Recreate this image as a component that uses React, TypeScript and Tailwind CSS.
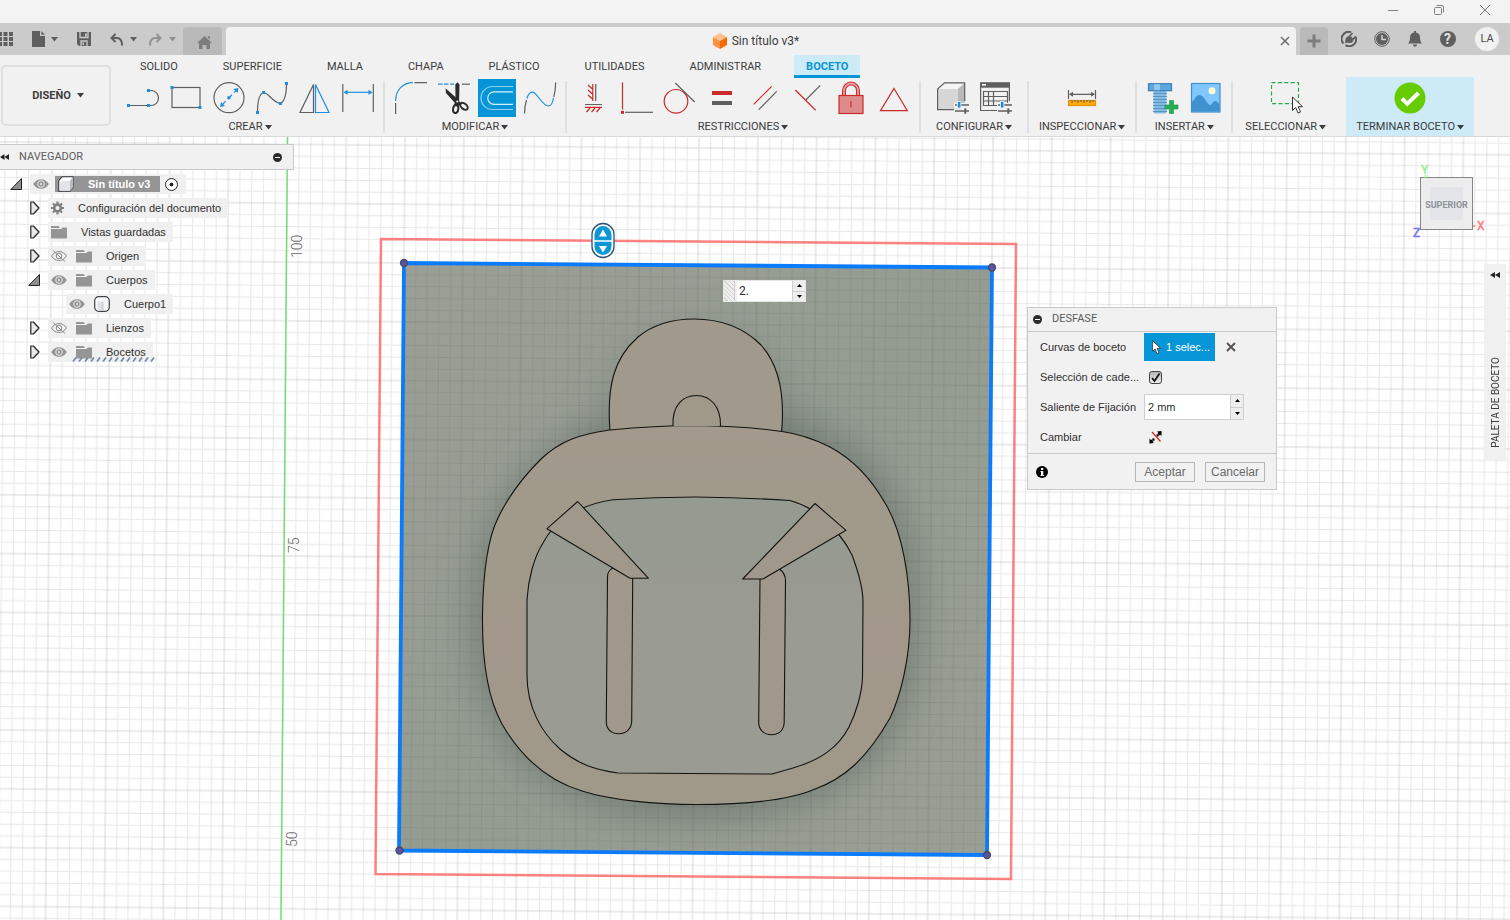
import React, { useState } from 'react'
import { clsx } from 'clsx'

const GRAY = '#5f5f5f'
const BLUE = '#1e8fe0'
const RED = '#cc2a2a'

const TABS = ['SOLIDO', 'SUPERFICIE', 'MALLA', 'CHAPA', 'PLÁSTICO', 'UTILIDADES', 'ADMINISTRAR', 'BOCETO']

const Caret: React.FC<{ className?: string }> = ({ className }) => (
  <svg className={clsx('shrink-0', className)} width="7" height="5" viewBox="0 0 7 5" fill="currentColor">
    <path d="M0 0h7L3.5 4.6z" />
  </svg>
)

/* 32x32 ribbon icon */
const Icon: React.FC<{ children: React.ReactNode }> = ({ children }) => (
  <svg width="32" height="32" viewBox="0 0 32 32" fill="none" stroke={GRAY} strokeWidth="1.2" className="shrink-0 overflow-visible">
    {children}
  </svg>
)

const Dot: React.FC<{ x: number; y: number; color?: string }> = ({ x, y, color = BLUE }) => (
  <rect x={x - 1.5} y={y - 1.5} width="3" height="3" fill={color} stroke="none" />
)

const Sliders = () => (
  <g>
    <path d="M17 23.2h16M17 29h16" stroke="#f1f1f1" strokeWidth="5" />
    <path d="M18 23h14M18 29h14" strokeWidth="1.6" />
    <rect x="20.5" y="19.5" width="3.4" height="6.5" fill={BLUE} stroke="#f1f1f1" strokeWidth="0.8" />
    <path d="M28.3 26.3v5.5" strokeWidth="2" />
  </g>
)

const IconLine = () => (
  <Icon>
    <path d="M1.5 23.5h19M22 8.5h2a7.5 7.5 0 0 1 0 15h-2" />
    <Dot x={1.5} y={23.5} /><Dot x={21.5} y={23.5} /><Dot x={21.5} y={8.5} />
  </Icon>
)
const IconRect = () => (
  <Icon>
    <rect x="2" y="5.5" width="28" height="20" />
    <Dot x={2} y={5.5} /><Dot x={30} y={25.5} />
  </Icon>
)
const IconCircle = () => (
  <Icon>
    <circle cx="16" cy="15.7" r="15" />
    <path d="M8.5 23.5 24 7.5" stroke={BLUE} strokeDasharray="6 3" />
    <path d="m25.5 6-1 5-4-4zM7 25l1-5 4 4z" fill={BLUE} stroke="none" />
    <Dot x={16} y={15.7} />
  </Icon>
)
const IconSpline = () => (
  <Icon>
    <path d="M1.5 30.5C1.5 20 3 12 7.500 10.5c5 0 9 10 17 11C29 19 30.500 12 30.500 1.500" />
    <Dot x={1.5} y={30.5} /><Dot x={7.5} y={10.5} /><Dot x={24.5} y={21.5} /><Dot x={30.5} y={1.5} />
  </Icon>
)
const IconMirror = () => (
  <Icon>
    <path d="M14.500 2.500V30.500H1z" />
    <path d="M16.500 2.500V30.500H30z" stroke={BLUE} />
  </Icon>
)
const IconDimension = () => (
  <Icon>
    <path d="M.8 2v28M31.300 2v28" />
    <path d="M3 10.300h26" stroke={BLUE} />
    <path d="M1.500 10.300l4-2.600v5.200zM30.500 10.300l-4-2.600v5.200z" fill={BLUE} stroke="none" />
  </Icon>
)
const IconFillet = () => (
  <Icon>
    <path d="M.6 21v11M19.500.6H32" />
    <path d="M.6 19C.6 8 8 .6 18 .6" stroke={BLUE} />
  </Icon>
)
const IconTrim = () => (
  <Icon>
    <path d="M0 2.200h16" stroke={BLUE} strokeDasharray="4.500 1.500" />
    <path d="M24 2.200h8" />
    <path d="M7.500 6.300 19 16.500 23.500 22 21 24 17 21 8 11z" fill="#2b2b2b" stroke="none" />
    <path d="M17.300 2.500 19.500.3 21.500 2.500 21 21 18.500 24.500 16.200 23 17.500 18z" fill="#2b2b2b" stroke="none" />
    <ellipse cx="17.700" cy="27" rx="2.600" ry="4" transform="rotate(8 17.700 27)" stroke="#2b2b2b" strokeWidth="2" />
    <ellipse cx="26" cy="24.300" rx="4.300" ry="2.700" transform="rotate(40 26 24.300)" stroke="#2b2b2b" strokeWidth="2" />
    <circle cx="19.300" cy="19.500" r="1" fill="#fff" stroke="none" />
  </Icon>
)
const IconOffset = () => (
  <Icon>
    <path d="M32 4.500H11.500a11.500 11.500 0 0 0 0 23H32" stroke="#8fd0f3" />
    <path d="M32 9.800H13a6.200 6.200 0 0 0 0 12.500H32" stroke="#d5effc" />
  </Icon>
)
const IconCurvature = () => (
  <Icon>
    <path d="M.5 31.500C.6 26 1.200 22 2.500 18M29.800 15C31 10 31.600 6 31.700.5" />
    <path d="M2.800 16.500C4.500 11.500 7 8.500 10.500 11c4 2.800 8.500 13 14 13 2.500 0 4.200-3.500 5-8" stroke={BLUE} />
  </Icon>
)
const IconHorVert = () => (
  <Icon>
    <path d="M18.700 2v17M8 22.500h17" />
    <path d="M15.800 2v17M8 25.300h17M11 3l4.500 4M11 8l4.500 4M11 13l4.500 4M9.500 30l3.500-4M14.500 30l3.500-4M19.500 30l3.500-4" stroke={RED} />
  </Icon>
)
const IconCoincident = () => (
  <Icon>
    <path d="M2.500.5v27" stroke={RED} />
    <path d="M5 30.300h28" />
    <Dot x={2.5} y={30.3} color={RED} />
  </Icon>
)
const IconTangent = () => (
  <Icon>
    <circle cx="13" cy="19.300" r="11.800" stroke={RED} />
    <path d="M12.300 1 31.700 20" />
  </Icon>
)
const IconEqual = () => (
  <Icon>
    <path d="M6 11h20" stroke={RED} strokeWidth="4" />
    <path d="M6 21h20" strokeWidth="4" />
  </Icon>
)
const IconParallel = () => (
  <Icon>
    <path d="M4.700 22.300 22.700 4.300" stroke={RED} />
    <path d="m9.700 27.700 18-18.400" />
  </Icon>
)
const IconPerpendicular = () => (
  <Icon>
    <path d="m3.300 8 20.400 20.300" stroke={RED} />
    <path d="M13.700 18 28.300 3.300" />
  </Icon>
)
const IconLock = () => (
  <Icon>
    <path d="M9 14V8.500a7 7 0 0 1 14 0V14" stroke={RED} strokeWidth="4" />
    <path d="M9 14V8.500a7 7 0 0 1 14 0V14" stroke="#e5a0a0" strokeWidth="1.800" />
    <rect x="4" y="13.500" width="24" height="18" fill="#df8b8b" stroke={RED} />
    <path d="M16 19v6.500" stroke={RED} />
  </Icon>
)
const IconSymmetry = () => (
  <Icon>
    <path d="m16 6.500 13.300 22.200H2.500z" stroke={RED} />
  </Icon>
)
const IconConfigure = () => (
  <Icon>
    <path d="M.6 7 7.500.8H27.700V23L21 28z" fill="#b9b9b9" stroke="none" />
    <path d="M.6 7 7.500.8H27.700L21 7z" fill="#f4f4f4" stroke="none" />
    <path d="M.6 7H21v20.700H.6z" fill="#d6d6d6" stroke="none" />
    <path d="M17 27.700H.6V7L7.500.8H27.700V19" />
    <Sliders />
  </Icon>
)
const IconTable = () => (
  <Icon>
    <path d="M.6 1v27.500H17M29.400 1v18" />
    <path d="M0 .2h30v5.500H0z" fill={GRAY} stroke="none" />
    <path d="M2 2h4v1.600H2z" fill="#fff" stroke="none" />
    <path d="M3.500 9.500h24v14h-24zM3.500 14.500h24M3.500 19h24M8.500 9.500v14M13.500 9.500v14" />
    <Sliders />
  </Icon>
)
const IconMeasure = () => (
  <Icon>
    <path d="M2.500 8v9M29.500 8v9M4 12.300h24" />
    <path d="m3 12.300 4-2.500v5zM29 12.300l-4-2.500v5z" fill={GRAY} stroke="none" />
    <rect x="2.500" y="18.500" width="27" height="5" fill="#ffab0a" stroke="#e59400" />
    <path d="M6 18v3M9 18v2M12 18v3M15 18v2M18 18v3M21 18v2M24 18v3M27 18v2" strokeWidth="1" />
  </Icon>
)
const IconBolt = () => (
  <Icon>
    <rect x="6.500" y="8" width="13" height="23.500" rx="2" fill="#84bbe4" stroke="none" />
    <path d="M6 11.500h14M6 14.500h14M6 17.500h14M6 20.500h14M6 23.500h14M6 26.500h14M6 29.500h14" stroke="#5795c5" />
    <rect x="1.500" y="1.700" width="23" height="7" fill="#5ea5db" stroke="#397fb4" />
    <path d="M7 2.200h6v6H7z" fill="#90c8ef" stroke="none" />
    <path d="M22.500 18.500h4v4.500H31v4h-4.500v4.500h-4V27H18v-4h4.500z" fill="#27ae55" stroke="#1c8f42" strokeWidth=".6" />
  </Icon>
)
const IconCanvas = () => (
  <Icon>
    <rect x="1.500" y="1.500" width="28.500" height="28.500" fill="#80c7ff" stroke="#3f90cc" />
    <circle cx="22" cy="8.700" r="3.500" fill="#fff8cf" stroke="none" />
    <path d="M2 20c3-3 4-7 7.500-7 5 0 7 9 10.500 10 2 0 3-4 5-4 2 0 3 2 4.500 3v7.500H2z" fill="#3f92cd" stroke="none" />
  </Icon>
)
const Cursor = () => (
  <path d="M.5.5v13.500l3.200-3 2.300 5.500 2.500-1-2.300-5.300h4.300z" fill="#fff" stroke="#333" strokeWidth="1" />
)
const IconSelect = () => (
  <Icon>
    <rect x="1.500" y=".7" width="27" height="21" stroke="#23a94e" strokeDasharray="4 2.400" />
    <g transform="translate(22 14.500)"><Cursor /></g>
  </Icon>
)
const IconFinish = () => (
  <Icon>
    <circle cx="16" cy="16" r="15.500" fill="#66cc00" stroke="none" />
    <path d="m8 16.500 5.300 5.300L24.500 11" stroke="#fff" strokeWidth="4" />
  </Icon>
)

interface ToolGroup {
  label: string
  pad: string
  tools: { name: string; Icon: React.FC; active?: boolean }[]
}

const GROUPS: ToolGroup[] = [
  {
    label: 'CREAR', pad: 'px-1',
    tools: [
      { name: 'Línea', Icon: IconLine }, { name: 'Rectángulo', Icon: IconRect },
      { name: 'Círculo', Icon: IconCircle }, { name: 'Spline', Icon: IconSpline },
      { name: 'Simetría', Icon: IconMirror }, { name: 'Cota', Icon: IconDimension },
    ],
  },
  {
    label: 'MODIFICAR', pad: 'px-1',
    tools: [
      { name: 'Empalme', Icon: IconFillet }, { name: 'Recortar', Icon: IconTrim },
      { name: 'Desfase', Icon: IconOffset, active: true }, { name: 'Curva de fusión', Icon: IconCurvature },
    ],
  },
  {
    label: 'RESTRICCIONES', pad: 'px-1',
    tools: [
      { name: 'Horizontal/Vertical', Icon: IconHorVert }, { name: 'Coincidente', Icon: IconCoincident },
      { name: 'Tangente', Icon: IconTangent }, { name: 'Igual', Icon: IconEqual },
      { name: 'Paralelo', Icon: IconParallel }, { name: 'Perpendicular', Icon: IconPerpendicular },
      { name: 'Bloquear', Icon: IconLock }, { name: 'Simétrico', Icon: IconSymmetry },
    ],
  },
  {
    label: 'CONFIGURAR', pad: 'px-[10px]',
    tools: [{ name: 'Configurar', Icon: IconConfigure }, { name: 'Tabla', Icon: IconTable }],
  },
  { label: 'INSPECCIONAR', pad: 'px-[10px]', tools: [{ name: 'Medir', Icon: IconMeasure }] },
  {
    label: 'INSERTAR', pad: 'px-1',
    tools: [{ name: 'Insertar pieza', Icon: IconBolt }, { name: 'Lienzo', Icon: IconCanvas }],
  },
  { label: 'SELECCIONAR', pad: 'px-3', tools: [{ name: 'Seleccionar', Icon: IconSelect }] },
]

const TitleBar = () => (
  <div className="h-[23px] flex justify-end items-center gap-9 bg-[#f3f3f3] pr-5 pb-[3px] text-[#808080]">
    <button aria-label="Minimizar" className="w-[10px] h-[10px]">
      <svg width="10" height="10" stroke="currentColor"><path d="M0 5.500h10" /></svg>
    </button>
    <button aria-label="Restaurar" className="w-[10px] h-[10px]">
      <svg width="10" height="10" fill="none" stroke="currentColor">
        <rect x=".5" y="2.500" width="7" height="7" rx="1" /><path d="M2.500.5H8A1.500 1.500 0 0 1 9.500 2v5.500" />
      </svg>
    </button>
    <button aria-label="Cerrar" className="w-[10px] h-[10px]">
      <svg width="10" height="10" stroke="currentColor"><path d="m0 0 10 10M10 0 0 10" /></svg>
    </button>
  </div>
)

const TabBar = () => (
  <div className="h-8 flex items-end bg-[#cbcbcb] text-[#5f5f5f]">
    {/* Acceso rápido */}
    <div className="h-full flex items-center gap-[19px] pr-[7px] shrink-0">
      <button aria-label="Panel de datos">
        <svg width="13" height="14" fill="currentColor">
          <path d="M0 0h2v4H0zM3.500 0h4v4h-4zM9 0h4v4H9zM0 5h2v4H0zM3.500 5h4v4h-4zM9 5h4v4H9zM0 10h2v4H0zM3.500 10h4v4h-4zM9 10h4v4H9z" />
        </svg>
      </button>
      <button aria-label="Archivo" className="flex items-center gap-[6px]">
        <svg width="13" height="16" fill="currentColor"><path d="M0 0h8v5h5v11H0z" /><path d="M9.300 0 13 3.800H9.300z" /></svg>
        <Caret />
      </button>
      <button aria-label="Guardar">
        <svg width="14" height="14" fill="currentColor">
          <path d="M0 0h14v14H2l-2-2z" />
          <path d="M3 0v5.500h8V0M4 14V9h6v5" fill="none" stroke="#cbcbcb" strokeWidth="1.300" /><path d="M8 1.500h1.800v3H8zM5.500 10.500h1.500v2.500H5.500z" fill="#cbcbcb" />
        </svg>
      </button>
      <div className="flex items-center gap-3">
        <button aria-label="Deshacer" className="flex items-center gap-[7px]">
          <svg width="13" height="13" fill="none" stroke="currentColor" strokeWidth="2"><path d="M5.500 1 1.500 5l4 4M1.500 5H7c3 0 5 2.500 5 7.500" /></svg>
          <Caret />
        </button>
        <button aria-label="Rehacer" className="flex items-center gap-[7px] text-[#929292]">
          <svg width="13" height="13" fill="none" stroke="currentColor" strokeWidth="2"><path d="m7.500 1 4 4-4 4M11.500 5H6C3 5 1 7.500 1 12.500" /></svg>
          <Caret />
        </button>
      </div>
    </div>
    <button aria-label="Inicio" className="w-[39px] h-7 mr-1 rounded-t bg-[#b9b9b9] flex justify-center items-end pl-1 pb-[6px] text-[#7d7d7d] shrink-0">
      <svg width="15" height="13" fill="currentColor"><path d="M7.500 0 15 7h-2v6H9.500V9h-4v4H2V7H0zM10.800 0h2v3.500l-2-1.800z" /></svg>
    </button>

    {/* Documento abierto */}
    <div className="flex-1 h-7 rounded-t bg-[#f1f1f1] flex items-center pr-[6px]">
      <div className="flex-1 flex justify-center items-center gap-[5px] pl-[6px] text-xs text-[#3c3c3c]">
        <svg width="14" height="16">
          <path d="m7 0 7 4-7 4-7-4z" fill="#ffc08a" /><path d="m0 4 7 4v8l-7-4z" fill="#ff9140" /><path d="m14 4-7 4v8l7-4z" fill="#f56a00" />
        </svg>
        Sin título v3*
      </div>
      <button aria-label="Cerrar documento" className="w-[10px] h-[10px]">
        <svg width="10" height="10" stroke="#6a6a6a" strokeWidth="1.500"><path d="m1 1 8 8M9 1 1 9" /></svg>
      </button>
    </div>
    <button aria-label="Nuevo documento" className="w-7 h-7 ml-1 rounded-t bg-[#b9b9b9] flex justify-center items-center text-[#7d7d7d] shrink-0">
      <svg width="14" height="14" stroke="currentColor" strokeWidth="3"><path d="M7 .5v13M.5 7h13" /></svg>
    </button>

    <div className="h-full flex items-center pl-1 pr-[11px] shrink-0">
      <button aria-label="Extensiones" className="w-[33px] flex justify-center">
        <svg width="16" height="16" fill="none" stroke="currentColor">
          <path d="M10 1.200A7 7 0 0 0 2.500 12.500M4.500 14.200A7 7 0 0 0 14.800 6" strokeWidth="2" />
          <path d="M3 13.500c1.500-1 1-2.500 1.500-5C5 5.500 8 4 10 5.500L12 7.500c1.500 3-1.500 5-4 4.500-2-.5-3.500-.5-5 1.500z" fill="currentColor" stroke="none" />
          <path d="m8.500 5.500 3-3.500M11.500 8.500l3.500-3" strokeWidth="1.700" />
        </svg>
      </button>
      <button aria-label="Estado de trabajos" className="w-[33px] flex justify-center">
        <svg width="16" height="16" fill="none">
          <circle cx="8" cy="8" r="7.300" stroke="currentColor" /><circle cx="8" cy="8" r="6" fill="currentColor" />
          <path d="M8 4v4.500h4" stroke="#d5d5d5" strokeWidth="1.500" />
        </svg>
      </button>
      <button aria-label="Notificaciones" className="w-[33px] flex justify-center">
        <svg width="14" height="16" fill="currentColor"><path d="M6 0h2v1.500c3 .5 4 2.500 4 5 0 3 .5 4.500 2 6H0c1.500-1.500 2-3 2-6 0-2.500 1-4.500 4-5zM5 13.500h4c0 3-4 3-4 0z" /></svg>
      </button>
      <button aria-label="Ayuda" className="w-[33px] flex justify-center">
        <span className="w-4 h-4 rounded-full bg-[#5f5f5f] text-[#e0e0e0] text-sm leading-4 font-bold">?</span>
      </button>
      <button className="w-6 h-6 ml-[11px] rounded-full bg-[#f1f1f1] text-[11px] text-[#4a4a4a]">LA</button>
    </div>
  </div>
)

const Ribbon: React.FC<{ tab: string; onTab: (t: string) => void }> = ({ tab, onTab }) => (
  <div className="flex bg-[#f1f1f1] border-b border-[#d9d9d9] text-[11px] leading-4 text-[#3c3c3c]">
    <button className="w-[110px] h-[61px] ml-[1px] mt-[10px] pl-1 rounded-[5px] border-2 border-[#dfdfdf] flex justify-center items-center gap-[6px] font-bold shrink-0">
      DISEÑO <Caret />
    </button>
    <div>
      <div className="flex gap-[21px] pl-[17px]">
        {TABS.map(t => (
          <button
            key={t}
            onClick={() => onTab(t)}
            className={clsx(
              'h-[23px] px-3 pt-[3px] border-b-[3px]',
              t === tab ? 'bg-[#cdeaf7] border-[#0696d7] text-[#0696d7] font-bold' : 'border-transparent'
            )}
          >
            {t}
          </button>
        ))}
      </div>
      <div className="flex pl-[6px]">
        {GROUPS.map(g => (
          <div key={g.label} className="flex items-start">
            <div className={clsx('flex flex-col items-center', g.pad)}>
              <div className="flex h-10 pt-[1px]">
                {g.tools.map(t => (
                  <button
                    key={t.name}
                    aria-label={t.name}
                    className="w-[43px] h-[38px] flex justify-center items-center"
                  >
                    <span className={clsx('h-[38px] flex items-center px-[3px]', t.active && 'bg-[#0696d7]')}>
                      <t.Icon />
                    </span>
                  </button>
                ))}
              </div>
              <button className="h-[18px] flex items-center gap-[2px]">{g.label} <Caret /></button>
            </div>
            <div className={clsx('w-[2px] h-[52px] mt-[3px]', g.label !== 'SELECCIONAR' && 'bg-[#dfdfdf]')} />
          </div>
        ))}
        <div className="flex flex-col items-center w-32 ml-[6px] -mt-[1px] bg-[#cdeaf7]">
          <button aria-label="Terminar" className="h-[41px] flex items-center"><IconFinish /></button>
          <button className="h-[18px] flex items-center gap-[2px]">TERMINAR BOCETO <Caret /></button>
        </div>
      </div>
    </div>
  </div>
)

/* Lienzo: rejilla girada medio grado, 11.76 px por mm */
const Viewport = () => (
  <svg className="absolute inset-0 w-full h-full" fontFamily="Roboto, sans-serif">
    <defs>
      <pattern id="grid" width="58.800" height="58.800" patternUnits="userSpaceOnUse" patternTransform="translate(404 263) rotate(0.490)">
        <path
          d="M11.760 0v58.800M23.520 0v58.800M35.280 0v58.800M47.040 0v58.800M0 11.760h58.800M0 23.520h58.800M0 35.280h58.800M0 47.040h58.800"
          stroke="#000" strokeOpacity=".09"
        />
        <path d="M0 0v58.800M58.800 0v58.800M0 0h58.800M0 58.800h58.800" stroke="#000" strokeOpacity=".15" />
      </pattern>
      <linearGradient id="plate" x1="0" y1="0" x2="1" y2="1">
        <stop offset="0" stopColor="#9b9f96" /><stop offset=".5" stopColor="#949c92" /><stop offset="1" stopColor="#9a9f94" />
      </linearGradient>
      <linearGradient id="ring" x1="0" y1="0" x2="0" y2="1">
        <stop offset="0" stopColor="#a3998c" /><stop offset=".3" stopColor="#9f9a8a" /><stop offset=".55" stopColor="#a2978a" />
        <stop offset=".8" stopColor="#a1988a" /><stop offset="1" stopColor="#9e9988" />
      </linearGradient>
      <linearGradient id="face" x1="0" y1="0" x2="0" y2="1">
        <stop offset="0" stopColor="#949b90" /><stop offset=".35" stopColor="#999a91" /><stop offset="1" stopColor="#9a9b91" />
      </linearGradient>
      <filter id="soft" x="-30%" y="-30%" width="160%" height="160%"><feGaussianBlur stdDeviation="22" /></filter>
      <clipPath id="plateClip"><path d="M404 263 992 267.500 987 855 399 850.500z" /></clipPath>
    </defs>
    <g transform="translate(0 -137)">
      <rect y="137" width="100%" height="100%" fill="url(#grid)" />
      <path d="M287.500 137 281 920" stroke="#6fe06f" strokeWidth="1.400" />
      <g fontSize="14" fill="#666" fontWeight="300">
        <text transform="translate(302 258) rotate(-90)">100</text>
        <text transform="translate(299 553) rotate(-90)">75</text>
        <text transform="translate(297 847) rotate(-90)">50</text>
      </g>

      {/* Placa base */}
      <path d="M404 263 992 267.500 987 855 399 850.500z" fill="url(#plate)" />
      <g clipPath="url(#plateClip)">
        <path d="M696 410C890 410 915 520 915 622 915 760 830 815 697 815 560 815 476 750 476 615 476 500 560 410 696 410z" fill="#59625d" fillOpacity=".6" filter="url(#soft)" />
        <ellipse cx="696" cy="405" rx="90" ry="75" fill="#59625d" fillOpacity=".3" filter="url(#soft)" />
        <rect x="390" y="250" width="610" height="610" fill="url(#grid)" opacity=".7" />
      </g>

      {/* Pieza */}
      <g stroke="#121412" strokeWidth="1.100" strokeLinejoin="round">
        <path d="M610 431C606.500 386 614 358 638 337 655 323 675 319 694 319 722 319 745 329 761 345 780 366 785 396 781.500 433z" fill="#a1998b" />
        <path
          d="M696 425.500C730 426 765 429 782 431.500 800 434 816 440 830 447 856 461 873 482 885 503 903 532 910 580 910 620 910 660 900 697 890 718 866 760 843 779 815 789 785 802 735 804.500 697 804.500 655 804.500 610 800 582 791 545 780 520 755 502 724 487 697 482 655 482.500 615 483 580 487 540 498 518 508 497 525 475 541 459 560 441 580 434 610 430 640 427 665 425.500 696 425.500z"
          fill="url(#ring)"
        />
        <path d="M673 426C672 405 683 395.500 696.500 395.500 710 395.500 721 406 720.500 426" fill="#a0998a" />
        <path
          d="M613 499.700Q655 497 696 497 745 497.500 790 500.500 809 506 822 517 843 536 852 555C858 571 863 587 863 602L862.500 677C862 695 855 715 849 727 838 748 820 760 793 768L772 774 618 773C595 770 578 764 560 749 542 733 527 708 527 675L527 600C528 580 534 557 543 543 552 525 575 505 613 499.700z"
          fill="url(#face)"
        />
        <path d="M632.700 578 631.700 721C631.500 729 626 733.700 618.500 733.700 611 733.500 606 729 606.300 721L607.500 577C607.500 572 609 570 613 568z" fill="#a1988b" />
        <path d="M760 579 758.700 722C758.700 730 764 734.700 771.500 734.700 779 734.500 784 730 784.200 722L785.500 581C785.500 575 783 571.500 779.500 569z" fill="#a1988b" />
        <path d="M547 528.700 577.700 501.500 648.500 578.300H630z" fill="#a0998b" />
        <path d="M846 530.300 815 503.500 742.700 579H763z" fill="#a0998b" />
      </g>

      {/* Perfil seleccionado y desfase */}
      <path d="M404 263 992 267.500 987 855 399 850.500z" fill="none" stroke="#0a7bfa" strokeWidth="3.800" />
      <path d="M381 239 1016 244 1011 879 375.500 874z" fill="none" stroke="#ff5050" strokeOpacity=".7" strokeWidth="2.500" />
      {[[404, 263], [992, 267.5], [987, 855], [399.5, 850.5]].map(([x, y]) => (
        <circle key={x} cx={x} cy={y} r="3.500" fill="#5a53a5" stroke="#4a4a5c" strokeWidth="1.300" />
      ))}

      {/* Manipulador */}
      <rect x="592" y="223.500" width="22" height="34" rx="11" fill="#fff" stroke="#29527a" strokeWidth="1.300" />
      <rect x="594.500" y="226" width="17" height="29" rx="8.500" fill="#0e97d6" />
      <path d="M594 241h18" stroke="#fff" strokeWidth="1.500" />
      <path d="m603 229.500 4 7h-8zM603 252.500l4-6.500h-8z" fill="#fff" />
    </g>
  </svg>
)

const Eye: React.FC<{ off?: boolean }> = ({ off }) => (
  <button aria-label="Visibilidad" className="w-4 h-4 shrink-0">
    <svg width="16" height="16" fill="none">
      {off ? (
        <g stroke="#8a8a8a">
          <path d="M.5 8C4 2 12 2 15.500 8 12 14 4 14 .5 8z" /><circle cx="8" cy="8" r="2.800" /><path d="m2 2.500 12 11" />
        </g>
      ) : (
        <g>
          <path d="M.2 8C4 1.500 12 1.500 15.800 8 12 14.500 4 14.500.2 8z" fill="#949494" />
          <circle cx="8" cy="8" r="3.300" fill="none" stroke="#f0f0f0" /><circle cx="8" cy="8" r="1" fill="#f0f0f0" />
        </g>
      )}
    </svg>
  </button>
)

const Folder = () => (
  <svg width="16" height="16" fill="#959595" className="shrink-0">
    <path d="M0 2h7.500L9 4H0zM0 5h10.500L11.500 3.500H16V14.500H0z" />
  </svg>
)

const Gear = () => (
  <svg width="13" height="14" viewBox="-7 -7 14 14" fill="none" stroke="#808080" className="shrink-0">
    <circle r="3.600" strokeWidth="2.800" />
    <path d="M0-7v3M0 4v3M-7 0h3M4 0h3M-5-5l2 2M3 3l2 2M-5 5l2-2M3-3l2-2" strokeWidth="2.200" />
  </svg>
)

const Cylinder = () => (
  <svg width="16" height="16" className="shrink-0">
    <rect x=".7" y=".7" width="14.600" height="14.600" rx="4" fill="#fafbfc" stroke="#3f454d" strokeWidth="1.200" />
    <path d="M3.500 5.500h4v9h-4z" fill="#dfe2e7" /><path d="M7.500 5.500h2v9h-2z" fill="#c9cdd4" />
  </svg>
)

const Cube = () => (
  <svg width="16" height="16" className="shrink-0" stroke="#33363b" strokeWidth="1.100" strokeLinejoin="round">
    <path d="M.8 4.500 4 .8h11.200V11L12 15.200H.8z" fill="#fff" />
    <path d="M12 4.500 15.200.8V11L12 15.200z" fill="#b9bcc2" stroke="none" /><path d="M1.500 5H12v9.500H1.500z" fill="#e3e4e8" stroke="none" />
  </svg>
)

const Toggle: React.FC<{ open?: boolean }> = ({ open }) => (
  <button aria-label={open ? 'Contraer' : 'Expandir'} className="w-5 shrink-0">
    <svg width="14" height="14" fill="none" stroke="#222" strokeLinejoin="round">
      {open ? <path d="M11.500 1.500V12.500H.800z" fill="#8f8f8f" /> : <path d="M2.800 1h2.500L11 7l-5.700 6H2.800z" fill="#e9e9e9" strokeWidth="1.200" />}
    </svg>
  </button>
)

interface Node {
  label: string
  icon: React.ReactNode
  eye?: 'on' | 'off'
  open?: boolean
  leaf?: boolean
  hatch?: boolean
}

const NODES: Node[] = [
  { label: 'Configuración del documento', icon: <Gear /> },
  { label: 'Vistas guardadas', icon: <Folder /> },
  { label: 'Origen', icon: <Folder />, eye: 'off' },
  { label: 'Cuerpos', icon: <Folder />, eye: 'on', open: true },
  { label: 'Cuerpo1', icon: <Cylinder />, eye: 'on', leaf: true },
  { label: 'Lienzos', icon: <Folder />, eye: 'off' },
  { label: 'Bocetos', icon: <Folder />, eye: 'on', hatch: true },
]

const Browser = () => (
  <aside className="relative w-[294px] pt-[7px]">
    <div className="h-[26px] flex items-center pr-[11px] bg-[#f1f1f1] border border-l-0 border-[#c9c9c9] text-[11px] text-[#5c5c5c]">
      <button aria-label="Ocultar navegador" className="w-[19px]">
        <svg width="9" height="6" fill="#222"><path d="M4.500 0v6L0 3zM9 0v6L4.500 3z" /></svg>
      </button>
      <span className="flex-1">NAVEGADOR</span>
      <Minus />
    </div>
    <ul className="pt-[2px] font-['Liberation_Sans',sans-serif] text-[11px] text-[#2f2f2f]">
      <li className="h-6 flex items-center pl-[10px]">
        <Toggle open />
        <div className="h-5 flex items-center bg-[#f0f0f0] pl-[3px] pr-2">
          <Eye />
          <div className="h-4 flex items-center gap-[14px] ml-[6px] mr-[5px] pl-[3px] pr-[10px] bg-[#959595] text-white font-bold">
            <Cube /> Sin título v3
          </div>
          <input type="radio" name="active" defaultChecked aria-label="Activar componente" className="appearance-none w-[13px] h-[13px] rounded-full border border-[#222] bg-white bg-[radial-gradient(#222_22%,transparent_28%)]" />
        </div>
      </li>
      {NODES.map(n => (
        <li key={n.label} className={clsx('h-6 flex items-center', n.leaf ? 'pl-[66px]' : 'pl-7')}>
          {!n.leaf && <Toggle open={n.open} />}
          <div className="relative h-5 flex items-center gap-[14px] bg-[#f0f0f0] pl-[3px] pr-[7px]">
            <div className="flex items-center gap-[9px]">
              {n.eye && <Eye off={n.eye === 'off'} />}
              {n.icon}
            </div>
            {n.label}
            {n.hatch && (
              <svg className="absolute left-6 bottom-0 w-[83px] h-[5px]">
                <path d="m1 4.500 3-4M7 4.500l3-4M13 4.500l3-4M19 4.500l3-4M25 4.500l3-4M31 4.500l3-4M37 4.500l3-4M43 4.500l3-4M49 4.500l3-4M55 4.500l3-4M61 4.500l3-4M67 4.500l3-4M73 4.500l3-4M79 4.500l3-4" stroke="#7688a8" strokeWidth="1.700" />
              </svg>
            )}
          </div>
        </li>
      ))}
    </ul>
  </aside>
)

const Minus = () => (
  <button aria-label="Contraer panel" className="w-[9px] h-[9px] rounded-full bg-[#2b2b2b] flex items-center justify-center shrink-0">
    <span className="w-[5px] h-[1px] bg-white" />
  </button>
)

const Spinner = () => (
  <div className="w-[13px] flex flex-col gap-[1px] bg-[#cfcfcf] border-l border-[#cfcfcf]">
    <button aria-label="Aumentar" className="flex-1 flex items-center justify-center bg-[#eee]">
      <svg width="5" height="3"><path d="M2.500 0 5 3H0z" /></svg>
    </button>
    <button aria-label="Reducir" className="flex-1 flex items-center justify-center bg-[#eee]">
      <svg width="5" height="3"><path d="M0 0h5L2.500 3z" /></svg>
    </button>
  </div>
)

const OffsetDialog = () => {
  const [chain, setChain] = useState(true)
  return (
    <section className="absolute left-[1027px] top-[170px] w-[250px] bg-[#f1f1f1] border border-[#c9c9c9] font-['Liberation_Sans',sans-serif] text-[11px] text-[#2f2f2f]">
      <header className="h-6 flex items-center gap-[10px] pl-[5px] border-b border-[#c9c9c9] font-[Roboto,sans-serif] text-[#5c5c5c]">
        <Minus /> DESFASE
      </header>
      <div className="grid grid-cols-[104px_1fr] auto-rows-[30px] items-center pl-3 pb-[1px]">
        <span>Curvas de boceto</span>
        <div className="flex items-center gap-[11px]">
          <button className="w-[71px] h-7 flex items-center gap-[5px] pl-2 bg-[#0696d7] text-white whitespace-nowrap">
            <svg width="9" height="14" viewBox="0 0 11 17"><Cursor /></svg>1 selec...
          </button>
          <button aria-label="Borrar selección">
            <svg width="10" height="10" stroke="#555" strokeWidth="2"><path d="m1 1 8 8M9 1 1 9" /></svg>
          </button>
        </div>
        <label htmlFor="chain" className="whitespace-nowrap">Selección de cade...</label>
        <div className="relative w-[13px] h-[13px] ml-[5px]">
          <input
            id="chain" type="checkbox" checked={chain} onChange={e => setChain(e.target.checked)}
            className="block appearance-none w-[13px] h-[13px] rounded-[3px] border border-[#444] bg-linear-to-b from-[#b5b5b5] to-[#eeeeee]"
          />
          {chain && (
            <svg className="absolute inset-0 pointer-events-none" width="13" height="13" fill="none" stroke="#111" strokeWidth="1.700"><path d="m3 7 2.500 3L10.500 2.500" /></svg>
          )}
        </div>
        <label htmlFor="offset" className="whitespace-nowrap">Saliente de Fijación</label>
        <div className="flex w-[100px] h-[26px] border border-[#cfcfcf]">
          <input id="offset" defaultValue="2 mm" className="min-w-0 flex-1 bg-white pl-[3px] outline-none" />
          <Spinner />
        </div>
        <span>Cambiar</span>
        <button aria-label="Cambiar" className="w-[13px] ml-[5px]">
          <svg width="13" height="13" stroke="#000">
            <path d="M12.500 0v5L8 .5zM.5 12.500V7.500L5 12z" fill="#000" stroke="none" />
            <path d="M2.500 10.500 5.500 7.500M10.500 2.500 8 5" strokeWidth="2.600" strokeDasharray="1.500 .5" /><path d="m3 1 8.500 9.500" stroke="#e02020" strokeWidth="1.200" />
          </svg>
        </button>
      </div>
      <footer className="h-[36px] flex items-center gap-[10px] pl-2 pr-[11px] border-t border-[#c9c9c9] text-xs text-[#6b6b6b]">
        <button aria-label="Información" className="mr-auto">
          <svg width="12" height="12"><circle cx="6" cy="6" r="6" /><path d="M5 2h2.300v2H5zM4.500 5h2.800v4h.8v1H4.500V9H5V6h-.5z" fill="#fff" /></svg>
        </button>
        <button className="w-[60px] h-5 border border-[#b5b5b5]">Aceptar</button>
        <button className="w-[60px] h-5 border border-[#b5b5b5]">Cancelar</button>
      </footer>
    </section>
  )
}

const ViewCube = () => (
  <svg className="absolute right-6 top-[20px]" width="76" height="84" fontFamily="Roboto, sans-serif" fontWeight="bold">
    <rect x="10.500" y="20.500" width="52" height="52" fill="#ececec" fillOpacity=".93" stroke="#858585" />
    <rect x="20" y="30" width="33" height="33" fill="#e3e5e8" />
    <text x="36.500" y="51" textAnchor="middle" fontSize="9" fill="#8d9299">SUPERIOR</text>
    <text x="11" y="17" fontSize="12" fontWeight="normal" stroke="#8cf58c" strokeWidth=".5" fill="#8cf58c">Y</text>
    <path d="M15.500 18v3" stroke="#8cf58c" strokeWidth="1.500" />
    <path d="M63 69h2.500" stroke="#ff8080" strokeWidth="1.500" />
    <text x="67" y="73" fontSize="12" fontWeight="normal" stroke="#ff8080" strokeWidth=".5" fill="#ff8080">X</text>
    <text x="3" y="80" fontSize="12" fontWeight="normal" stroke="#7575f5" strokeWidth=".5" fill="#7575f5">Z</text>
  </svg>
)

const SketchPalette = () => (
  <button className="absolute right-1 top-[127px] w-[22px] h-[196px] bg-[#f0f0f0] flex flex-col justify-between items-center pt-2 pb-3 text-[10px] text-[#3c3c3c]">
    <svg width="10" height="6" fill="#222"><path d="M5 0v6L0 3zM10 0v6L5 3z" /></svg>
    <span className="[writing-mode:vertical-rl] rotate-180 whitespace-nowrap">PALETA DE BOCETO</span>
  </button>
)

export default function App() {
  const [tab, setTab] = useState('BOCETO')
  return (
    <div className="min-h-screen flex flex-col overflow-hidden bg-white font-[Roboto,sans-serif]">
      <TitleBar />
      <TabBar />
      <Ribbon tab={tab} onTab={setTab} />
      <main className="relative flex-1 overflow-hidden">
        <Viewport />
        <Browser />
        <ViewCube />
        <SketchPalette />

        {/* Valor flotante del desfase */}
        <div className="absolute left-[723px] top-[143px] flex h-[22px] border border-[#e6e6e6] bg-[#eee]">
          <span className="w-[11px] border-r border-[#ccc] bg-[repeating-linear-gradient(45deg,#eee_0_2px,#d2d2d2_2px_3px)]" />
          <input aria-label="Distancia de desfase" defaultValue="2." className="w-[55px] ml-[2px] pl-[2px] bg-white text-xs text-[#2f2f2f] outline-none" />
          <Spinner />
        </div>
        <OffsetDialog />
      </main>
    </div>
  )
}
